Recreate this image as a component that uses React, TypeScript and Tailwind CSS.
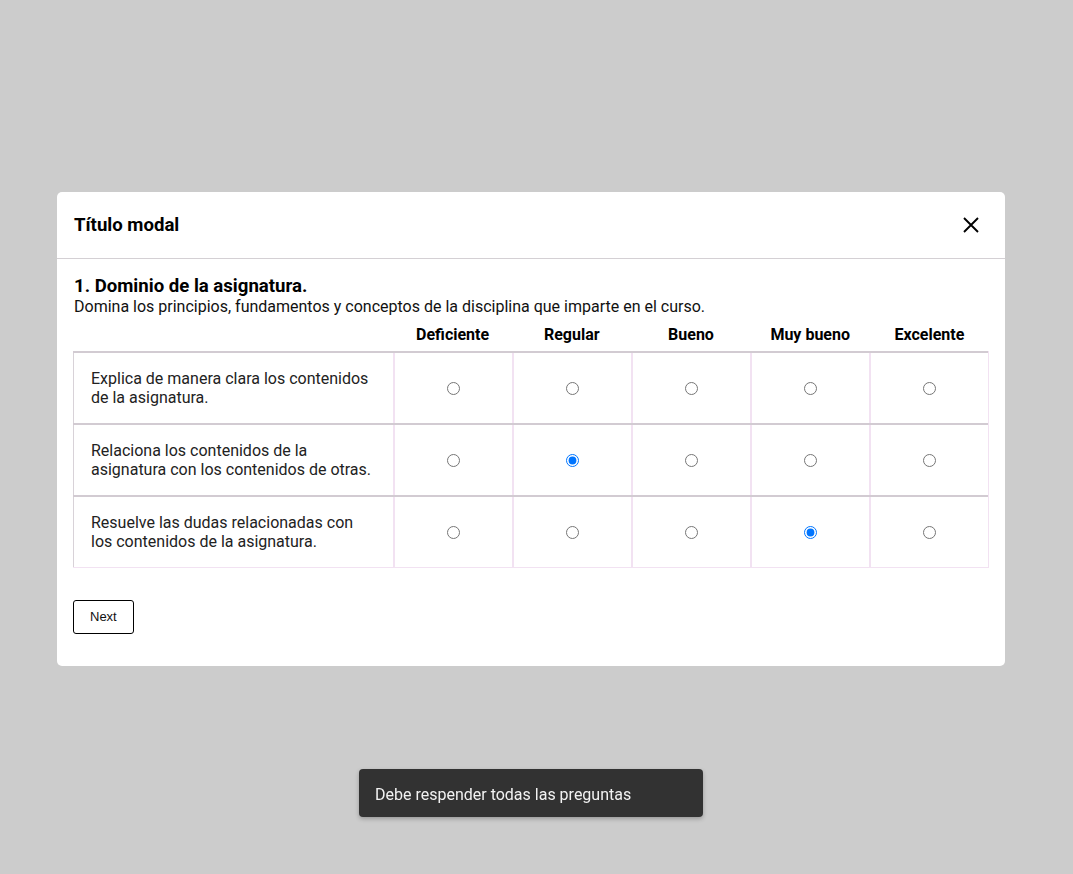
import { useState } from 'react';

const opciones = ['Deficiente', 'Regular', 'Bueno', 'Muy bueno', 'Excelente'];

const preguntas = [
  { id: 'p1', texto: 'Explica de manera clara los contenidos de la asignatura.', valor: -1 },
  { id: 'p2', texto: 'Relaciona los contenidos de la asignatura con los contenidos de otras.', valor: 1 },
  { id: 'p3', texto: 'Resuelve las dudas relacionadas con los contenidos de la asignatura.', valor: 3 },
];

function CloseIcon() {
  return (
    <svg width="16" height="16" viewBox="0 0 16 16" fill="none" stroke="#000" strokeWidth="1.9">
      <path d="M1 1 L15 15 M15 1 L1 15" />
    </svg>
  );
}

export default function App() {
  const [respuestas, setRespuestas] = useState<Record<string, number>>(
    Object.fromEntries(preguntas.map((p) => [p.id, p.valor]))
  );

  return (
    <div className="min-h-screen w-full bg-[#cccccc] pt-[192px] pl-[57px] font-['Roboto',sans-serif] text-black">
      {/* modal */}
      <div className="w-[948px] rounded-[5px] bg-white">
        <div className="flex items-center justify-between border-b border-[#d4d0d4] py-5 pr-4 pl-[17px]">
          <h5 className="text-[18.6px] leading-[24px] font-bold">Título modal</h5>
          <button className="mr-[5px] flex h-[26px] w-[26px] items-center justify-center">
            <CloseIcon />
          </button>
        </div>

        <div className="px-4 pt-4 pb-8">
          <h3 className="pl-[1px] text-[18.6px] leading-[22px] font-bold">1. Dominio de la asignatura.</h3>
          <p className="pl-[1px] text-[16px] leading-[20px] text-[#111]">
            Domina los principios, fundamentos y conceptos de la disciplina que imparte en el curso.
          </p>

          <div className="grid h-[34px] grid-cols-[320px_repeat(5,1fr)] items-center pt-[1px]">
            <div />
            {opciones.map((o) => (
              <div key={o} className="text-center text-[16px] font-bold">
                {o}
              </div>
            ))}
          </div>

          <div className="border-r border-b border-[#f2e2f2]">
            {preguntas.map((p) => (
              <div
                key={p.id}
                className="grid h-[72px] grid-cols-[320px_repeat(5,1fr)] border-t-2 border-[#d2cbd2]"
              >
                <div className="flex items-center border-l border-[#d8d2d8] pr-4 pl-[17px] text-[16px] leading-[19px] text-[#222]">
                  {p.texto}
                </div>
                {opciones.map((o, i) => (
                  <label
                    key={o}
                    className="flex items-center justify-center border-l-2 border-[#f2e2f2]"
                  >
                    <input
                      type="radio"
                      name={p.id}
                      className="m-0 h-[13px] w-[13px]"
                      checked={respuestas[p.id] === i}
                      onChange={() => setRespuestas({ ...respuestas, [p.id]: i })}
                    />
                  </label>
                ))}
              </div>
            ))}
          </div>

          <button className="mt-8 h-[34px] rounded-[3px] border border-black px-4 font-['Liberation_Sans',Arial,sans-serif] text-[13px] text-[#111]">
            Next
          </button>
        </div>
      </div>

      {/* toast */}
      <div className="fixed top-[769px] left-[359px] flex h-[48px] w-[344px] items-center rounded-[4px] bg-[#323232] pt-[4px] pl-4 text-[16px] text-[#f2f2f2] shadow-[0_2px_4px_rgba(0,0,0,0.25)]">
        Debe respender todas las preguntas
      </div>
    </div>
  );
}
